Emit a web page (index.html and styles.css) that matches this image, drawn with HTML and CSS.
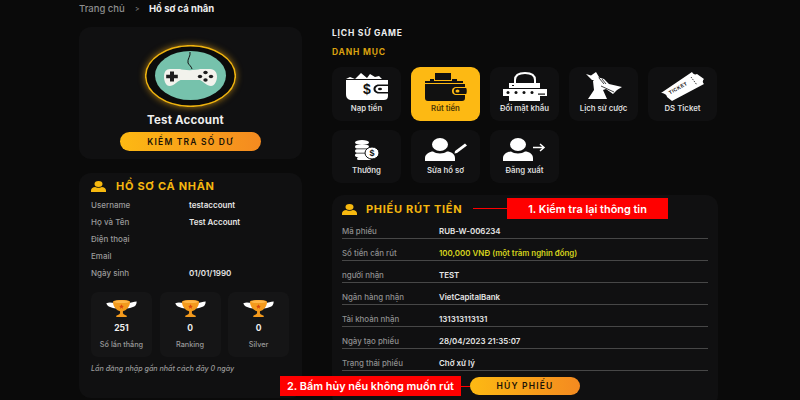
FILE: index.html
```html
<!DOCTYPE html>
<html lang="vi">
<head>
<meta charset="utf-8">
<title>Hồ sơ cá nhân</title>
<link rel="stylesheet" href="styles.css">
</head>
<body>
<svg class="defs" width="0" height="0" aria-hidden="true">
  <defs>
    <symbol id="user" viewBox="0 0 15 11">
      <ellipse cx="7.500" cy="3" rx="4" ry="3"/>
      <path d="M0 11V9.400C0 7.400 2 6.200 4.200 6 5.200 6.900 9.800 6.900 10.800 6 13 6.200 15 7.400 15 9.400V11Z"/>
    </symbol>
    <symbol id="trophy" viewBox="0 0 32 20">
      <path fill="#fff" d="M9 4C6 4 3 3 0 4.500 1 7 2 8 4 8.500 6 9.500 8 10 10 10Z"/>
      <path fill="#fff" d="M23 4C26 4 29 2.500 32 2.500 32 6 30 8 28 8.500 26 9.500 24 10 22 10Z"/>
      <path fill="#f39a1d" d="M7 2.500C10 .5 22 .5 25 2.500 25 8 21 12 17.500 12.800V15C18.500 16.500 20 16.800 21.500 17.500V19H10.500V17.500C12 16.800 13.500 16.500 14.500 15V12.800C11 12 7 8 7 2.500Z"/>
      <ellipse cx="16" cy="2.800" rx="8" ry="1.500" fill="#ffb84a"/>
      <path fill="#d9480f" d="M16 5.500l.8 1.700 1.700.2-1.300 1.100.4 1.700-1.600-.9-1.600.9.4-1.700-1.300-1.100 1.700-.2Z"/>
    </symbol>
  </defs>
</svg>
<div class="page">
  <nav class="crumbs">
    <span class="crumb-home">Trang chủ</span>
    <span class="crumb-sep">&gt;</span>
    <span class="crumb-now">Hồ sơ cá nhân</span>
  </nav>
  <div class="layout">
    <aside class="left">
      <section class="card card-account">
        <div class="avatar">
          <svg width="91" height="62" viewBox="0 0 91 62">
            <ellipse cx="45.500" cy="31" rx="44.800" ry="30.300" fill="#0b0b0b" stroke="#efb30f" stroke-width="1.500"/>
            <ellipse cx="45.500" cy="30.500" rx="35.500" ry="24.500" fill="#76c2ac"/>
            <path d="M45 7C46 11 42 14 43 18 44 20 46.500 21.500 47 24" fill="none" stroke="#111" stroke-width="1"/>
            <path d="M25 24H35C38 25.500 51 25.500 55 24H65C70 24 72 28 72 31.500 72 36 69.500 41 66 41 62 41 58 36.500 55 35H35.500C32 36.500 29 41 24.500 41 21 41 19 36 19 31.500 19 27 21 24 25 24Z" fill="#f2f2ec"/>
            <path d="M25 26.500h4v3.300h3.800v3.400H29v3.300h-4v-3.300h-3.800v-3.400H25Z" fill="#1d1d1d"/>
            <ellipse cx="60.500" cy="27.500" rx="2.200" ry="1.800" fill="#1d1d1d"/><ellipse cx="60.500" cy="35" rx="2.200" ry="1.800" fill="#1d1d1d"/><ellipse cx="55" cy="31.500" rx="2.200" ry="1.800" fill="#1d1d1d"/><ellipse cx="66" cy="31.500" rx="2.200" ry="1.800" fill="#1d1d1d"/>
          </svg>
        </div>
        <h2 class="account-name">Test Account</h2>
        <button class="pill pill-balance">KIỂM TRA SỐ DƯ</button>
      </section>

      <section class="card card-profile">
        <h3 class="heading heading-profile"><svg class="heading-icon"><use href="#user"/></svg>HỒ SƠ CÁ NHÂN</h3>
        <dl class="info">
          <div class="info-row"><dt>Username</dt><dd>testaccount</dd></div>
          <div class="info-row"><dt>Họ và Tên</dt><dd>Test Account</dd></div>
          <div class="info-row"><dt>Điện thoại</dt><dd></dd></div>
          <div class="info-row"><dt>Email</dt><dd></dd></div>
          <div class="info-row"><dt>Ngày sinh</dt><dd>01/01/1990</dd></div>
        </dl>
        <div class="stats">
          <div class="stat"><svg class="trophy"><use href="#trophy"/></svg><strong>251</strong><span>Số lần thắng</span></div>
          <div class="stat"><svg class="trophy"><use href="#trophy"/></svg><strong>0</strong><span>Ranking</span></div>
          <div class="stat"><svg class="trophy"><use href="#trophy"/></svg><strong>0</strong><span>Silver</span></div>
        </div>
        <p class="last-login">Lần đăng nhập gần nhất cách đây 0 ngày</p>
      </section>
    </aside>

    <main class="right">
      <h4 class="section-white">LỊCH SỬ GAME</h4>
      <h4 class="section-gold">DANH MỤC</h4>
      <div class="tiles">
        <a class="tile">
          <svg width="42" height="29" viewBox="0 -1 42 29" fill="#fff">
            <path d="M0 6 4 4 9 6 15 0 21 5 24 1 29 4 33 3 36 6H2Z"/>
            <path d="M0 7H42V11.500H33C29 11.500 27.500 14 27.500 16 27.500 18 29 20.500 33 20.500H42V23C42 26 40 27 38 27H6C2 27 0 25 0 21Z"/>
            <path d="M33 13H42V19H33C31 19 29.500 17.500 29.500 16 29.500 14.500 31 13 33 13Z"/>
            <ellipse cx="34" cy="16" rx="2" ry="1.300" fill="#111"/>
            <text x="21" y="21" class="dollar">$</text>
          </svg>
          <span>Nạp tiền</span>
        </a>
        <a class="tile tile-active">
          <svg width="42" height="29" viewBox="0 -1 42 29" fill="#111">
            <path d="M10 0H26V7H10Z"/>
            <path d="M0 8H5V6H9V8H27V6H32V8H38V10H0Z"/>
            <path d="M0 11H40V14H32C28 14 27 16 27 18 27 20 28 22 32 22H40V25C40 27 39 28 37 28H3C1 28 0 27 0 25Z"/>
            <path d="M31 15H41C42 15 42 21 41 21H31C28 21 28 15 31 15Z"/>
            <ellipse cx="32.500" cy="18" rx="2" ry="1.500" fill="#fdb913"/>
          </svg>
          <span>Rút tiền</span>
        </a>
        <a class="tile">
          <svg width="44" height="29" viewBox="0 0 44 29">
            <path d="M12 11V8C12 3 16 1 22 1S32 3 32 8V11" fill="none" stroke="#fff" stroke-width="2"/>
            <path d="M6 11H37V16H6ZM6 23H37V29H6Z" fill="#fff"/>
            <rect y="17" width="44" height="7" fill="#fff"/>
            <g fill="#111"><circle cx="5" cy="20.500" r="1.500"/><circle cx="13" cy="20.500" r="1.500"/><circle cx="21" cy="20.500" r="1.500"/><circle cx="29" cy="20.500" r="1.500"/><rect x="35" y="21.500" width="7" height="1.200"/></g>
            <rect x="9" y="13" width="2" height="1" fill="#111"/>
          </svg>
          <span>Đổi mật khẩu</span>
        </a>
        <a class="tile">
          <svg width="36" height="29" viewBox="0 0 36 29" fill="#fff">
            <path d="M0 2 5 3.500 10 0 13 5 9 8 6 8Z"/>
            <path d="M7 9 11 5 18 7 23 12 36 15 31 18 27 22 20 17 17 18 21 27H2L8 18Z"/>
            <path d="M13 6 18 12 M16 7 20 12 M15 14 28 20" fill="none" stroke="#111" stroke-width=".8"/>
          </svg>
          <span>Lịch sử cược</span>
        </a>
        <a class="tile">
          <svg width="43" height="29" viewBox="0 0 43 29">
            <path d="M0 21 31 0C32 2 34 3 36 2L43 7C41 9 42 11 43 12L11 29 6 25C6 23 3 21 0 21Z" fill="#fff"/>
            <path d="M30 5 36 13" stroke="#111" stroke-width=".8" stroke-dasharray="1.500 1"/>
            <text class="ticket-mark" transform="translate(9 22.500) rotate(-29)">TICKET</text>
          </svg>
          <span>DS Ticket</span>
        </a>
        <a class="tile tile-low">
          <svg width="24" height="23" viewBox="0 -2 24 23" fill="#fff">
            <ellipse cx="7" cy="2.500" rx="7" ry="2.500"/>
            <rect y="5" width="14" height="3.500" rx="1.700"/>
            <rect y="9.200" width="13" height="3.500" rx="1.700"/>
            <rect y="13.400" width="13" height="3.500" rx="1.700"/>
            <rect x="2" y="17" width="14" height="3" rx="1.500"/>
            <ellipse cx="17" cy="13" rx="7" ry="6" stroke="#111"/>
            <text x="17" y="16" class="coin">$</text>
          </svg>
          <span>Thưởng</span>
        </a>
        <a class="tile tile-low">
          <svg width="42" height="23" viewBox="0 0 42 23" fill="#fff">
            <ellipse cx="15" cy="6.500" rx="8" ry="6.500"/>
            <path d="M0 23V20C0 16 5 13.500 8 13.500 11 16 19 16 22 13.500 26 13.500 30 16 30 20V23Z"/>
            <path d="M30 13 40 5.500 42 7.500 32 15 29.500 15.500Z"/>
          </svg>
          <span>Sửa hồ sơ</span>
        </a>
        <a class="tile tile-low">
          <svg width="43" height="23" viewBox="0 0 43 23" fill="#fff">
            <ellipse cx="15" cy="6.500" rx="8" ry="6.500"/>
            <path d="M0 23V20C0 16 5 13.500 8 13.500 11 16 19 16 22 13.500 26 13.500 30 16 30 20V23Z"/>
            <path d="M30 9.500H41M37 6 41 9.500 37 13" fill="none" stroke="#fff" stroke-width="1.500"/>
          </svg>
          <span>Đăng xuất</span>
        </a>
      </div>

      <section class="card card-ticket">
        <h3 class="heading heading-ticket"><svg class="heading-icon"><use href="#user"/></svg>PHIẾU RÚT TIỀN</h3>
        <dl class="ticket">
          <div class="ticket-row"><dt>Mã phiếu</dt><dd>RUB-W-006234</dd></div>
          <div class="ticket-row"><dt>Số tiền cần rút</dt><dd class="amount">100,000 VNĐ (một trăm nghìn đồng)</dd></div>
          <div class="ticket-row"><dt>người nhận</dt><dd>TEST</dd></div>
          <div class="ticket-row"><dt>Ngân hàng nhận</dt><dd>VietCapitalBank</dd></div>
          <div class="ticket-row"><dt>Tài khoản nhận</dt><dd>131313113131</dd></div>
          <div class="ticket-row"><dt>Ngày tạo phiếu</dt><dd>28/04/2023 21:35:07</dd></div>
          <div class="ticket-row"><dt>Trạng thái phiếu</dt><dd>Chờ xử lý</dd></div>
        </dl>
        <div class="cancel-wrap"><button class="pill pill-cancel">HỦY PHIẾU</button></div>
      </section>
    </main>
  </div>

  <div class="note note-one"><i class="note-line"></i><b>1. Kiểm tra lại thông tin</b></div>
  <div class="note note-two"><b>2. Bấm hủy nếu không muốn rút</b><i class="note-line"></i></div>
</div>
</body>
</html>
```

FILE: styles.css
```css
* { box-sizing: border-box; margin: 0; padding: 0; }
html, body { width: 800px; height: 400px; overflow: hidden; background: #0a0a0a; }
body { font-family: Inter, "Liberation Sans", sans-serif; color: #eee; }
.defs { display: block; height: 0; }
.page { position: relative; width: 800px; height: 400px; overflow: hidden; padding-left: 79px; }

.crumbs { display: flex; align-items: center; height: 16px; font-size: 9.500px; }
.crumb-home { color: #8d8d8d; font-weight: 500; width: 56px; }
.crumb-sep { color: #9d9d9d; font-size: 7px; width: 14px; }
.crumb-now { color: #eee; font-weight: 700; }

.layout { display: flex; gap: 30px; align-items: flex-start; }
.left { width: 223px; display: flex; flex-direction: column; gap: 14px; padding-top: 11px; }
.right { width: 386px; padding-top: 11px; }

.card { background: #101011; border-radius: 12px; }
.card-account { height: 132px; display: flex; flex-direction: column; align-items: center; padding-top: 18px; }
.avatar { width: 91px; height: 62px; border-radius: 50%; box-shadow: 0 0 7px rgba(240, 170, 20, .7); }
.avatar svg { display: block; }
.account-name { font-size: 11.500px; font-weight: 700; color: #eee; margin: 6px 10px 0 0; line-height: 14px; letter-spacing: .2px; }
.pill { border: 0; border-radius: 10px; background: linear-gradient(90deg, #fdb913, #f48a20); color: #1b1206; font: 600 8.500px Inter, "Liberation Sans", sans-serif; letter-spacing: 1.200px; }
.pill-balance { width: 141px; height: 19px; margin-top: 5px; }

.card-profile { height: 225px; padding: 0 12px; }
.heading { display: flex; align-items: center; color: #f5b70f; font-size: 11px; font-weight: 700; letter-spacing: .7px; }
.heading-profile { height: 23px; padding-top: 3px; }
.heading-icon { width: 15px; height: 11px; fill: #f7b90f; margin-right: 10px; }
.info-row { display: flex; height: 17px; align-items: center; font-size: 8px; }
.info-row dt { width: 98px; color: #9a9a9a; font-weight: 500; }
.info-row dd { color: #e6e6e6; font-weight: 600; }
.stats { display: flex; gap: 7.500px; margin-top: 11px; }
.stat { width: 61px; height: 65px; background: #151516; border-radius: 7px; display: flex; flex-direction: column; align-items: center; padding-top: 7px; }
.trophy { width: 31px; height: 19px; }
.stat strong { font-size: 8.500px; font-weight: 700; color: #eee; margin-top: 5px; line-height: 10px; }
.stat span { font-size: 7.300px; color: #999; font-weight: 500; margin-top: 7px; line-height: 9px; }
.last-login { font-size: 7.150px; font-style: italic; color: #9a9a9a; font-weight: 500; margin-top: 6.500px; line-height: 9px; }

.section-white, .section-gold { font-size: 8.500px; font-weight: 700; line-height: 12px; letter-spacing: .8px; }
.section-white { color: #eee; }
.section-gold { color: #d9a00f; margin-top: 7px; }
.tiles { display: grid; grid-template-columns: repeat(5, 69px); grid-template-rows: 54px 53px; gap: 9px 10px; margin-top: 9px; }
.tile { background: #101011; border-radius: 9px; display: flex; flex-direction: column; align-items: center; justify-content: flex-start; padding-top: 5px; color: #ddd; font-size: 7.800px; font-weight: 600; }
.tile svg { display: block; }
.tile span { margin-top: 1.500px; line-height: 10px; white-space: nowrap; }
.tile-active { background: #fdb913; color: #4a3605; }
.tile-low { padding-top: 8px; }
.tile-low span { margin-top: 3.500px; }
.dollar { font: 700 14px "Liberation Sans", sans-serif; fill: #111; text-anchor: middle; }
.coin { font: 700 9px "Liberation Sans", sans-serif; fill: #111; text-anchor: middle; }
.ticket-mark { font: 700 5px "Liberation Sans", sans-serif; fill: #111; letter-spacing: .4px; }

.card-ticket { margin-top: 12px; height: 212px; padding: 0 10px; }
.heading-ticket { height: 22px; padding-top: 6px; }
.heading-ticket .heading-icon { margin-right: 9px; }
.ticket-row { display: flex; align-items: center; height: 22px; padding-top: 6px; border-bottom: 1px solid #474747; font-size: 7.900px; }
.ticket-row dt { width: 97px; color: #8f8f8f; font-weight: 500; }
.ticket-row dd { color: #e6e6e6; font-weight: 600; }
.ticket-row .amount { color: #d7d51d; }
.cancel-wrap { padding: 6px 0 0 128px; }
.pill-cancel { width: 110px; height: 18px; display: block; border-radius: 9px; }

.note { position: absolute; display: flex; align-items: center; }
.note b { display: flex; align-items: center; justify-content: center; background: #f00; color: #fff; font-size: 10.900px; font-weight: 600; white-space: nowrap; }
.note-line { display: block; height: 1px; background: #f00; }
.note-one { left: 473px; top: 198px; }
.note-one b { width: 161px; height: 21px; }
.note-one .note-line { width: 34px; }
.note-two { left: 280px; top: 376px; }
.note-two b { width: 181px; height: 20px; }
.note-two .note-line { width: 9px; }
```
